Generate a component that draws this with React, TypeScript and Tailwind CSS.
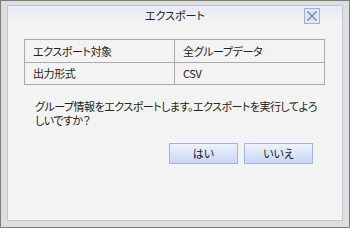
import React from 'react';

const font = {
  fontFamily: '"Noto Sans CJK JP", "Liberation Sans", sans-serif',
  fontFeatureSettings: '"palt"',
};

export default function App() {
  return (
    <div
      className="w-[350px] h-[228px] border border-[#7c7c7c] bg-[#dedede] pt-[4px] px-[6px] pb-[6px] text-[11px] text-[#222]"
      style={font}
    >
      <div className="h-full border border-[#c2c6cf] bg-[#f3f3f3] flex flex-col">
        {/* Title bar */}
        <div className="relative h-[18px] bg-gradient-to-b from-[#e6eaf8] to-[#f3f3f3] flex items-center justify-center">
          <span className="text-[11px] leading-none">エクスポート</span>
          <button className="absolute right-[22px] top-[2px] w-[16px] h-[16px] border border-[#9eb2e2] bg-[#dfe6fa] flex items-center justify-center">
            <svg width="12" height="12" viewBox="0 0 12 12">
              <path d="M1.5 1.5 L10.5 10.5 M10.5 1.5 L1.5 10.5" stroke="#8a8f9c" strokeWidth="1.6" />
            </svg>
          </button>
        </div>

        {/* Table */}
        <table className="mt-[15px] ml-[16px] w-[301px] border-collapse border border-[#a9a9a9] bg-[#f3f3f3] tracking-[-0.4px]">
          <tbody>
            <tr className="h-[23px]">
              <td className="w-[150px] border border-[#a9a9a9] pl-[8px] leading-none">エクスポート対象</td>
              <td className="border border-[#a9a9a9] pl-[8px] leading-none">全グループデータ</td>
            </tr>
            <tr className="h-[22px]">
              <td className="border border-[#a9a9a9] pl-[8px] leading-none">出力形式</td>
              <td className="border border-[#a9a9a9] pl-[8px] leading-none">CSV</td>
            </tr>
          </tbody>
        </table>

        {/* Message */}
        <div className="mt-[14px] ml-[27px] w-[300px] leading-[14px] text-[11px] tracking-[-0.5px]">
          <p className="whitespace-nowrap">グループ情報をエクスポートします。エクスポートを実行してよろ</p>
          <p>しいですか？</p>
        </div>

        {/* Buttons */}
        <div className="mt-[16px] mr-[29px] flex justify-end gap-[6px]">
          <button className="w-[69px] h-[21px] border border-[#a3b3d9] bg-gradient-to-b from-[#eef2fd] to-[#c9d7f6] text-[11px] leading-none">
            はい
          </button>
          <button className="w-[69px] h-[21px] border border-[#a3b3d9] bg-gradient-to-b from-[#eef2fd] to-[#c9d7f6] text-[11px] leading-none">
            いいえ
          </button>
        </div>
      </div>
    </div>
  );
}
